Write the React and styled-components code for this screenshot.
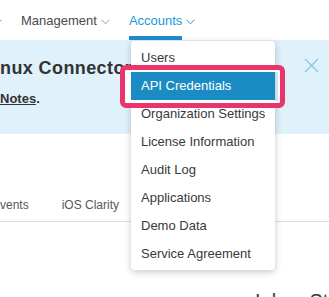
import React from "react";
import styled, { createGlobalStyle } from "styled-components";

const Global = createGlobalStyle`
  html, body { margin: 0; padding: 0; background: #fff; }
  body { font-family: "Liberation Sans", Arial, sans-serif; overflow: hidden; }
`;

const Page = styled.div`
  position: relative;
  width: 329px;
  height: 297px;
  overflow: hidden;
  background: #fff;
`;

const NavBar = styled.nav`
  display: flex;
  align-items: center;
  height: 40px;
  gap: 19px;
  margin-left: -7px;
`;

const NavItem = styled.div`
  display: flex;
  align-items: center;
  gap: 4px;
  height: 40px;
  color: ${(p) => (p.$active ? "#1b9ad6" : "#4a4a4a")};
  font-size: 13px;
`;

const NavLabel = styled.span`
  box-sizing: border-box;
  height: 40px;
  display: flex;
  align-items: center;
  padding-top: 5px;
  border-bottom: 4px solid ${(p) => (p.$active ? "#1e8dcd" : "transparent")};
`;

const Chevron = styled.svg`
  width: 9px;
  height: 6px;
  margin-top: 3px;
  flex: none;
`;

const Banner = styled.section`
  position: relative;
  height: 94px;
  box-sizing: border-box;
  background: #dff1fb;
  padding-top: 17px;
  color: #333;
`;

const BannerTitle = styled.div`
  font-size: 18px;
  line-height: 22px;
  font-weight: bold;
  letter-spacing: 0.4px;
  white-space: nowrap;
`;

const BannerText = styled.div`
  margin-top: 11px;
  font-size: 13px;
  line-height: 18px;
  font-weight: bold;
  a { color: #333; text-decoration: underline; }
`;

const Close = styled.svg`
  position: absolute;
  right: 10px;
  top: 18px;
  width: 15px;
  height: 15px;
`;

const TabBar = styled.div`
  display: flex;
  margin-top: 54px;
  border-bottom: 1px solid #dcdcdc;
  margin-left: -8px;
`;

const Tab = styled.div`
  font-size: 12px;
  line-height: 16px;
  color: #58585b;
  padding: 9px 0 8px;
  margin-right: 33px;
  white-space: nowrap;
`;

const Heading = styled.h2`
  margin: 67px 0 0 255px;
  font-size: 20px;
  line-height: 24px;
  font-weight: normal;
  color: #3a3a3a;
  white-space: nowrap;
`;

const Menu = styled.ul`
  position: absolute;
  left: 131px;
  top: 41px;
  width: 144px;
  margin: 0;
  padding: 3px 0 2px;
  list-style: none;
  background: #fff;
  border-radius: 4px;
  box-shadow: 0 2px 7px rgba(0, 0, 0, 0.22);
`;

const MenuItem = styled.li`
  height: 28px;
  line-height: 28px;
  padding-left: 10px;
  font-size: 13px;
  color: ${(p) => (p.$selected ? "#fff" : "#39393b")};
  background: ${(p) => (p.$selected ? "#1b8bc3" : "transparent")};
  white-space: nowrap;
`;

const Callout = styled.div`
  position: absolute;
  left: 120px;
  top: 65px;
  width: 165px;
  height: 43px;
  box-sizing: border-box;
  border: 5px solid #e9356c;
  border-radius: 6px;
  box-shadow: inset 0 0 0 2px #fff, inset 6px 0 0 #fff;
  pointer-events: none;
`;

const Down = ({ color }) => (
  <Chevron viewBox="0 0 9 6">
    <polyline points="0.5,0.8 4.5,4.8 8.5,0.8" fill="none" stroke={color} strokeWidth="1" />
  </Chevron>
);

const items = [
  "Users",
  "API Credentials",
  "Organization Settings",
  "License Information",
  "Audit Log",
  "Applications",
  "Demo Data",
  "Service Agreement",
];

export default function App() {
  return (
    <Page>
      <Global />
      <NavBar>
        <NavItem>
          <Down color="#999" />
        </NavItem>
        <NavItem>
          <NavLabel>Management</NavLabel>
          <Down color="#999" />
        </NavItem>
        <NavItem $active>
          <NavLabel $active>Accounts</NavLabel>
          <Down color="#1b9ad6" />
        </NavItem>
      </NavBar>
      <Banner>
        <BannerTitle>nux Connector</BannerTitle>
        <BannerText>
          <a>Notes</a>.
        </BannerText>
        <Close viewBox="0 0 15 15">
          <path d="M1 1 L14 14 M14 1 L1 14" stroke="#8ec5e2" strokeWidth="1.3" fill="none" />
        </Close>
      </Banner>
      <TabBar>
        <Tab>Events</Tab>
        <Tab>iOS Clarity</Tab>
      </TabBar>
      <Heading>Inbox Status</Heading>
      <Menu>
        {items.map((it) => (
          <MenuItem key={it} $selected={it === "API Credentials"}>
            {it}
          </MenuItem>
        ))}
      </Menu>
      <Callout />
    </Page>
  );
}
